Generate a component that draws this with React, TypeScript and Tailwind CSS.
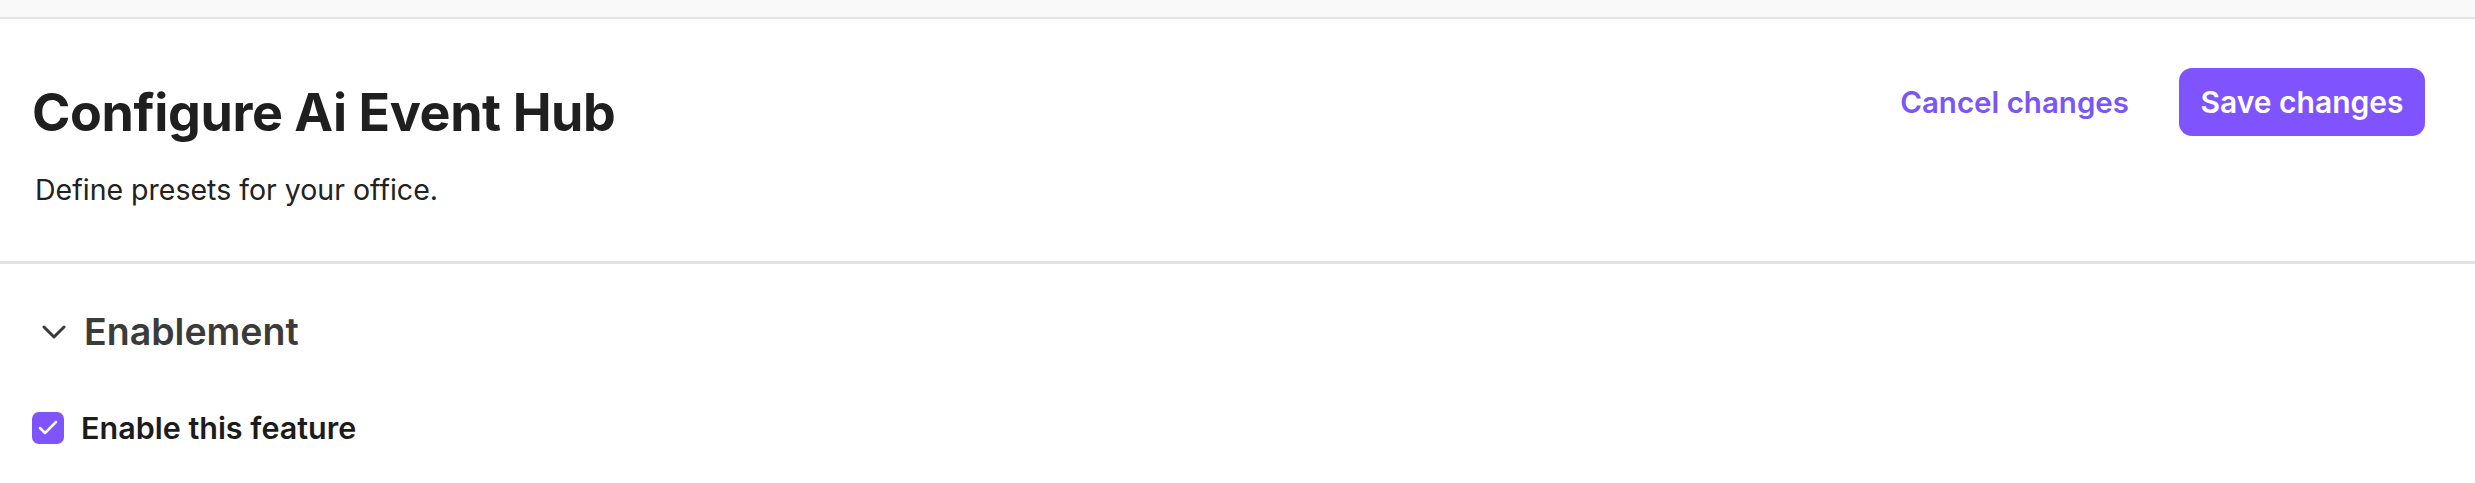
import { Check } from 'lucide-react';

export default function App() {
  return (
    <div className="min-h-screen w-full bg-white font-['Inter',_'Liberation_Sans',_sans-serif] antialiased">
      {/* Top strip */}
      <div className="h-[19px] w-full border-b-2 border-[#e4e4e4] bg-[#f9f9f9]" />

      {/* Header */}
      <div className="flex items-start justify-between border-b-[3px] border-[#e3e3e3] pb-[51px] pl-[32px] pr-[50px] pt-[49px]">
        <div className="pt-[15px]">
          <h1 className="text-[52px] font-bold leading-[60px] tracking-[-0.4px] text-[#1f1f1f]">
            Configure Ai Event Hub
          </h1>
          <p className="mt-[27px] pl-[3px] text-[28.5px] leading-[40px] text-[#222222]">
            Define presets for your office.
          </p>
        </div>

        <div className="flex items-center gap-[50px]">
          <button className="text-[29.5px] font-semibold text-[#7b56f6]">Cancel changes</button>
          <button className="flex h-[68px] w-[246px] items-center justify-center rounded-[13px] bg-[#7f54ff] text-[30px] font-semibold text-white">
            Save changes
          </button>
        </div>
      </div>

      {/* Enablement section */}
      <div className="pl-[32px] pt-[45px]">
        <div className="flex items-center gap-[18px] pl-[10px]">
          <svg width="24" height="14" viewBox="0 0 24 14" fill="none" className="shrink-0">
            <polyline
              points="2,2 12,12 22,2"
              stroke="#3a3a3a"
              strokeWidth="3"
              strokeLinecap="round"
              strokeLinejoin="round"
            />
          </svg>
          <h2 className="text-[37.5px] font-semibold leading-[45px] text-[#3b3b3b]">Enablement</h2>
        </div>

        <label className="mt-[56px] flex items-center gap-[17px]">
          <span className="flex h-[32px] w-[32px] items-center justify-center rounded-[7px] bg-[#7f54ff]">
            <Check className="h-[24px] w-[24px] text-white" strokeWidth={2.5} />
          </span>
          <span className="text-[30.5px] font-semibold leading-[36px] text-[#1c1c1c]">
            Enable this feature
          </span>
        </label>
      </div>
    </div>
  );
}
